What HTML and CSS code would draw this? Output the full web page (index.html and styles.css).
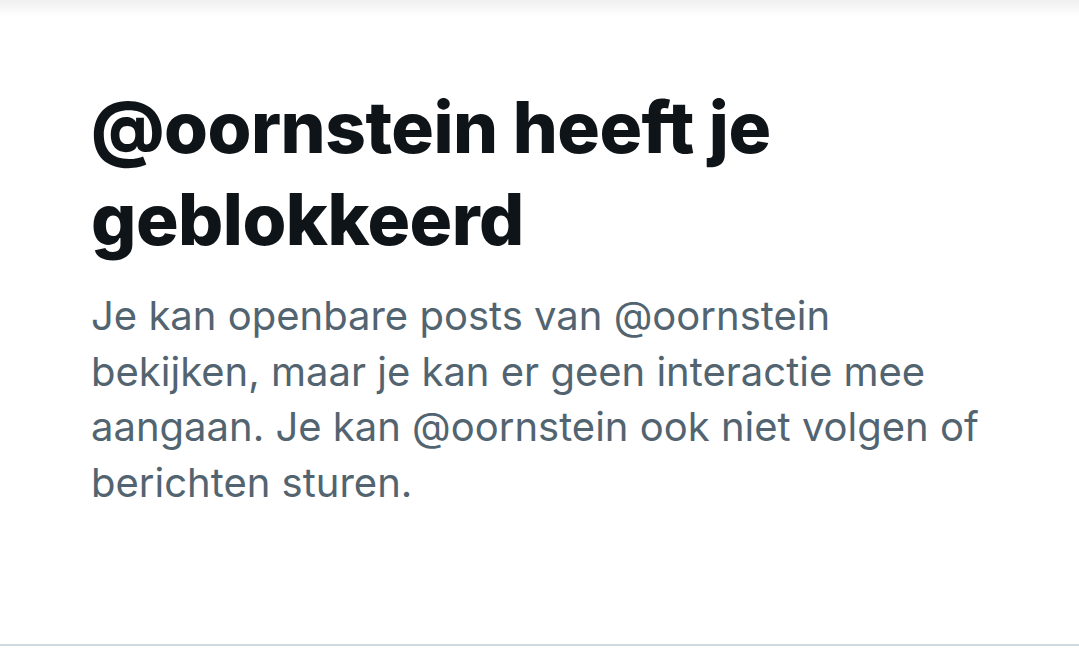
FILE: index.html
```html
<!DOCTYPE html>
<html lang="nl">

<head>
    <meta charset="utf-8">
    <title>Geblokkeerd</title>
    <link rel="stylesheet" href="styles.css">
</head>

<body>
    <div class="page">
        <div class="top-shade"></div>
        <div class="blocked">
            <h1 class="blocked-title">@oornstein heeft je geblokkeerd</h1>
            <p class="blocked-text">Je kan openbare posts van @oornstein bekijken, maar je kan er geen interactie mee aangaan. Je kan @oornstein ook niet volgen of berichten sturen.</p>
        </div>
        <div class="bottom-line"></div>
    </div>
</body>

</html>
```

FILE: styles.css
```css
/* reset */

body,
h1,
p {
    margin: 0;
    padding: 0;
}

body {
    background: #fff;
    font-family: Inter, "Noto Sans", sans-serif;
}

.page {
    display: flex;
    flex-direction: column;
    height: 651px;
}

/* schaduw bovenaan */
.top-shade {
    height: 16px;
    background: linear-gradient(#f0f0f0, #fff);
}

.blocked {
    flex: 1;
    padding: 65px 0 0 91px;
    width: 910px;
}

.blocked-title {
    color: #0f1419;
    font-size: 71px;
    font-weight: 800;
    line-height: 92px;
    letter-spacing: -0.5px;
}

.blocked-text {
    margin-top: 23px;
    color: #536471;
    font-size: 40px;
    font-weight: 400;
    line-height: 55.5px;
}

.bottom-line {
    height: 2px;
    background: #cfd9de;
    margin-bottom: 5px;
}
```
